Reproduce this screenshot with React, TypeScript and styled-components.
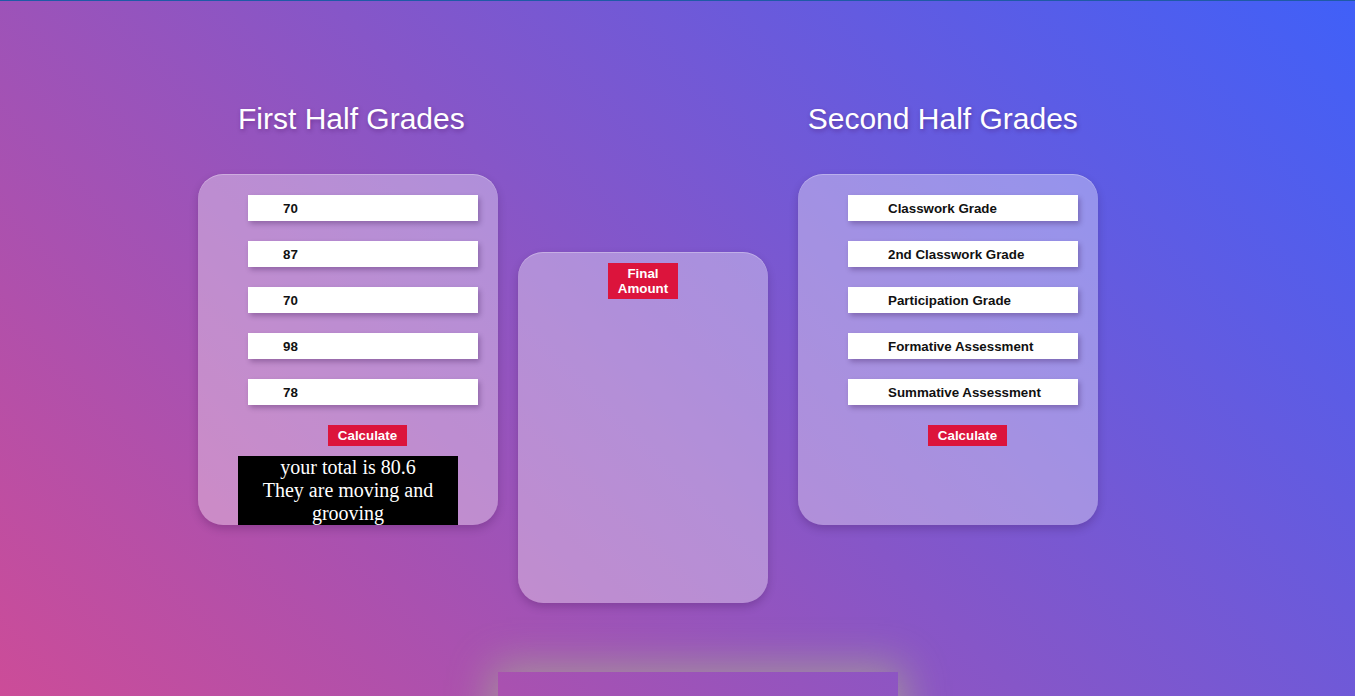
import React from "react";
import styled, { createGlobalStyle } from "styled-components";

const Global = createGlobalStyle`
  html {
    border-top: 1px solid #1f5aa6;
    overflow-y: scroll;
  }
  html::-webkit-scrollbar {
    width: 15px;
    background: #f1f1f1;
  }
  html::-webkit-scrollbar-thumb {
    background: #c1c1c1;
    border-left: 2px solid #f1f1f1;
    border-right: 2px solid #f1f1f1;
    border-top: 12px solid #f1f1f1;
  }
  body {
    margin: 0;
    font-family: "Liberation Sans", Arial, sans-serif;
    background: linear-gradient(45deg, #cc4c98 0%, #4060f8 100%);
    background-attachment: fixed;
  }
`;

const Page = styled.div`
  padding-top: 101px;
  padding-bottom: 13px;
`;

const TitleRow = styled.div`
  display: flex;
  padding-left: 238px;
  gap: 343px;
`;

const Title = styled.h2`
  margin: 0;
  font-size: 30px;
  font-weight: normal;
  line-height: 34px;
  color: #ffffff;
  white-space: nowrap;
  text-shadow: 1px 2px 4px rgba(60, 0, 80, 0.35);
`;

const CardsRow = styled.div`
  display: flex;
  align-items: flex-start;
  margin-top: 38px;
  padding-left: 198px;
`;

const Card = styled.section<{ $w: number; $top?: number; $left?: number; $center?: boolean }>`
  box-sizing: border-box;
  flex-shrink: 0;
  width: ${(p) => p.$w}px;
  height: 351px;
  margin-top: ${(p) => p.$top ?? 0}px;
  margin-left: ${(p) => p.$left ?? 0}px;
  padding: ${(p) => (p.$center ? "11px 0 0 0" : "21px 0 0 50px")};
  border-radius: 25px;
  background: rgba(255, 255, 255, 0.34);
  box-shadow: inset 0 1px 0 rgba(255, 255, 255, 0.28), 0 4px 9px rgba(40, 0, 60, 0.22);
  overflow: hidden;
  display: flex;
  flex-direction: column;
  align-items: ${(p) => (p.$center ? "center" : "flex-start")};
  & > * {
    flex-shrink: 0;
  }
`;

const FieldList = styled.div`
  display: flex;
  flex-direction: column;
  gap: 20px;
`;

const Field = styled.input<{ $indent: number }>`
  box-sizing: border-box;
  width: 230px;
  height: 26px;
  margin: 0;
  border: none;
  outline: none;
  padding: 0 0 0 ${(p) => p.$indent}px;
  background: #ffffff;
  font-family: "Liberation Sans", Arial, sans-serif;
  font-size: 13.333px;
  font-weight: bold;
  color: #111111;
  box-shadow: 2px 3px 5px rgba(40, 0, 60, 0.28);
  &::placeholder {
    color: #111111;
    opacity: 1;
  }
`;

const RedButton = styled.button<{ $w: number; $h: number }>`
  box-sizing: border-box;
  width: ${(p) => p.$w}px;
  height: ${(p) => p.$h}px;
  margin: 0;
  border: none;
  padding: 0 4px;
  background: #dc143c;
  color: #ffffff;
  font-family: "Liberation Sans", Arial, sans-serif;
  font-size: 13.333px;
  font-weight: bold;
  line-height: 15px;
  text-align: center;
  cursor: pointer;
`;

const CalcButton = styled(RedButton)`
  margin-top: 20px;
  margin-left: 80px;
`;

const Result = styled.div`
  width: 220px;
  margin-top: 10px;
  margin-left: -10px;
  background: #000000;
  color: #ffffff;
  font-family: "Liberation Serif", "Times New Roman", serif;
  font-size: 20px;
  line-height: 23px;
  text-align: center;
  min-height: 80px;
`;

const GlowBox = styled.div`
  width: 400px;
  height: 1180px;
  margin-top: 69px;
  margin-left: 498px;
  box-shadow: 0 0 40px 6px rgba(165, 160, 150, 0.85);
`;

const firstHalf = ["70", "87", "70", "98", "78"];
const secondHalf = [
  "Classwork Grade",
  "2nd Classwork Grade",
  "Participation Grade",
  "Formative Assessment",
  "Summative Assessment",
];

export default function App() {
  return (
    <Page>
      <Global />
      <TitleRow>
        <Title>First Half Grades</Title>
        <Title>Second Half Grades</Title>
      </TitleRow>
      <CardsRow>
        <Card $w={300}>
          <FieldList>
            {firstHalf.map((v, i) => (
              <Field key={i} $indent={35} defaultValue={v} />
            ))}
          </FieldList>
          <CalcButton $w={79} $h={21}>Calculate</CalcButton>
          <Result>
            <div>your total is 80.6</div>
            <div>They are moving and grooving</div>
          </Result>
        </Card>
        <Card $w={250} $top={78} $left={20} $center>
          <RedButton $w={70} $h={36}>Final Amount</RedButton>
        </Card>
        <Card $w={300} $left={30}>
          <FieldList>
            {secondHalf.map((p, i) => (
              <Field key={i} $indent={40} placeholder={p} />
            ))}
          </FieldList>
          <CalcButton $w={79} $h={21}>Calculate</CalcButton>
        </Card>
      </CardsRow>
      <GlowBox />
    </Page>
  );
}
